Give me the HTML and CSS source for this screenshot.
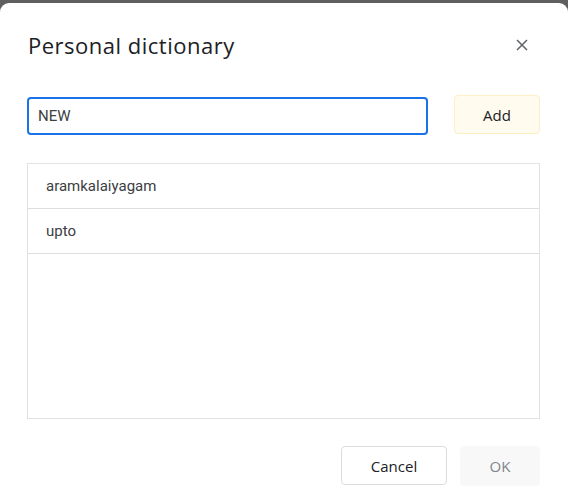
FILE: index.html
```html
<!DOCTYPE html>
<html>
<head>
<meta charset="utf-8">
<link rel="stylesheet" href="styles.css">
</head>
<body>
<div class="dialog">
  <div class="header">
    <h1 class="title">Personal dictionary</h1>
    <button class="close" aria-label="Close">
      <svg width="12" height="12" viewBox="0 0 12 12"><path d="M1 1L11 11M11 1L1 11" stroke="#5f6368" stroke-width="1.5" fill="none"/></svg>
    </button>
  </div>
  <div class="add-row">
    <div class="input">NEW</div>
    <button class="btn add">Add</button>
  </div>
  <div class="list">
    <div class="row">aramkalaiyagam</div>
    <div class="row">upto</div>
  </div>
  <div class="footer">
    <button class="btn cancel">Cancel</button>
    <button class="btn ok">OK</button>
  </div>
</div>
</body>
</html>
```

FILE: styles.css
```css
html, body {
  margin: 0;
  padding: 0;
  height: 100%;
}
body {
  background: #5f5f5f;
  font-family: Roboto, "Liberation Sans", sans-serif;
  overflow: hidden;
}
.dialog {
  margin-top: 3px;
  height: calc(100% - 3px);
  box-sizing: border-box;
  background: #fff;
  border-radius: 9px 9px 0 0;
  padding: 28px 28px 0 27px;
  display: flex;
  flex-direction: column;
}
.header {
  display: flex;
  align-items: center;
  justify-content: space-between;
  height: 28px;
}
.title {
  margin: 0 0 0 1px;
  font-family: "Open Sans", Roboto, sans-serif;
  font-weight: 400;
  font-size: 22px;
  line-height: 28px;
  color: #202124;
  letter-spacing: 0.5px;
}
.close {
  border: 0;
  background: none;
  padding: 0;
  width: 12px;
  height: 12px;
  margin-right: 12px;
  display: flex;
}
.add-row {
  display: flex;
  align-items: flex-start;
  margin-top: 36px;
  gap: 26px;
}
.input {
  margin-top: 2px;
  flex: 1;
  height: 38px;
  box-sizing: border-box;
  border: 2px solid #1a73e8;
  border-radius: 4px;
  padding: 0 9px;
  display: flex;
  align-items: center;
  font-size: 15px;
  color: #3c4043;
}
.btn {
  font-family: "Open Sans", Roboto, sans-serif;
  font-size: 15px;
  font-weight: 500;
  border-radius: 4px;
  box-sizing: border-box;
  padding: 0;
  cursor: pointer;
}
.add {
  width: 86px;
  height: 39px;
  background: #fffbee;
  border: 1px solid #fbefc4;
  color: #202124;
}
.list {
  margin-top: 28px;
  height: 256px;
  box-sizing: border-box;
  border: 1px solid #e2e2e2;
}
.row {
  height: 45px;
  box-sizing: border-box;
  border-bottom: 1px solid #dedede;
  padding-left: 18px;
  display: flex;
  align-items: center;
  font-size: 15px;
  color: #3c4043;
}
.footer {
  display: flex;
  justify-content: flex-end;
  gap: 13px;
  margin-top: 27px;
}
.cancel {
  width: 106px;
  height: 39px;
  background: #fff;
  border: 1px solid #dadce0;
  color: #202124;
}
.ok {
  width: 80px;
  height: 40px;
  background: #f8f8f8;
  border: 0;
  color: #80868b;
}
```
